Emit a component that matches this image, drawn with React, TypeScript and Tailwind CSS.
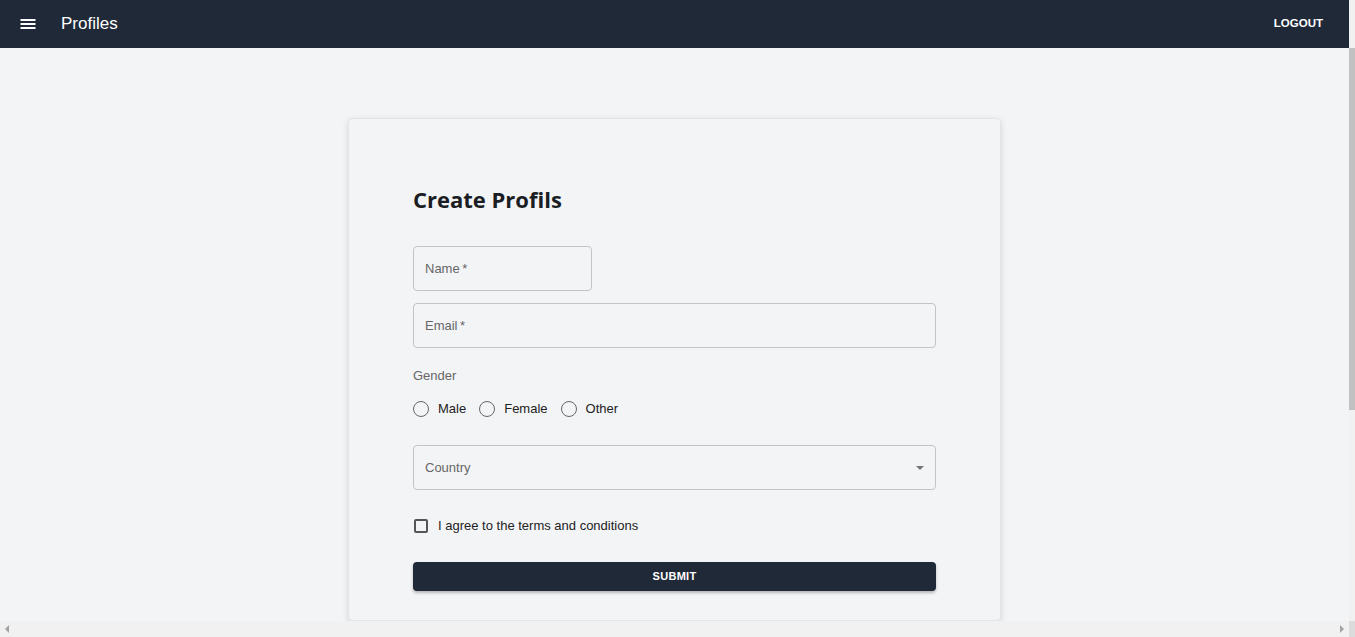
import { useState } from "react";

const font = "font-['Liberation_Sans',Arial,sans-serif]";

const MenuIcon = () => (
  <svg width="24" height="24" viewBox="0 0 24 24" className="text-white">
    <path d="M4.5 7h15v2h-15zM4.5 11h15v2h-15zM4.5 15h15v2h-15z" fill="currentColor" />
  </svg>
);

const Field = ({ label, className }: { label: string; className?: string }) => (
  <div
    className={`h-[45px] rounded-[4px] border border-[#c4c4c4] flex items-center px-[11px] text-[13px] text-[#666] ${className ?? ""}`}
  >
    <span>
      {label}
      {"\u2009*"}
    </span>
  </div>
);

const Radio = ({ label }: { label: string }) => (
  <label className="flex items-center gap-[9px] cursor-pointer">
    <span className="w-4 h-4 rounded-full border-[1.5px] border-[#666]" />
    <span className="text-[13px] text-[#222]">{label}</span>
  </label>
);

const ProfileForm = () => {
  const [agree, setAgree] = useState(false);
  return (
    <section className="w-[653px] rounded-[4px] border border-[#e3e4e7] bg-[#f3f4f6] shadow-[0_2px_6px_rgba(0,0,0,0.12)] px-[64px] pt-[64px] pb-24">
      <h1 className="font-['Open_Sans',sans-serif] font-bold text-[22px] leading-8 text-[#1a1d23]">
        Create Profils
      </h1>
      <div className="mt-[31px] flex flex-col gap-3">
        <Field label="Name" className="w-[179px]" />
        <Field label="Email" />
      </div>
      <p className="mt-[18px] text-[13px] leading-5 text-[#666]">Gender</p>
      <div className="mt-[11px] h-6 flex items-center gap-[13px]">
        <Radio label="Male" />
        <Radio label="Female" />
        <Radio label="Other" />
      </div>
      <div className="mt-[24px] h-[45px] rounded-[4px] border border-[#c4c4c4] flex items-center justify-between pl-[11px] pr-[11px] text-[13px] text-[#666]">
        <span>Country</span>
        <span className="w-0 h-0 border-l-[4px] border-r-[4px] border-t-[4px] border-l-transparent border-r-transparent border-t-[#757575]" />
      </div>
      <label
        className="mt-[24px] h-6 flex items-center gap-[10px] cursor-pointer"
        onClick={() => setAgree(!agree)}
      >
        <span
          className={`ml-[1px] w-[14px] h-[14px] rounded-[2px] border-2 border-[#555] ${agree ? "bg-[#1f2937]" : ""}`}
        />
        <span className="text-[13px] text-[#222]">I agree to the terms and conditions</span>
      </label>
      <button className="mt-[24px] w-full h-[29px] rounded-[4px] bg-[#1f2937] text-white text-[11px] font-bold tracking-[0.3px] shadow-[0_2px_3px_rgba(0,0,0,0.25)]">
        SUBMIT
      </button>
    </section>
  );
};

export default function App() {
  return (
    <div className={`${font} w-full h-[637px] flex flex-col overflow-hidden bg-[#f3f4f6]`}>
      <div className="flex flex-1 min-h-0">
        <div className="w-[1349px] flex flex-col">
          <header className="h-12 bg-[#1f2937] flex items-center justify-between pl-[16px] pr-[26px]">
            <div className="flex items-center gap-[21px]">
              <MenuIcon />
              <span className="text-white text-[17px]">Profiles</span>
            </div>
            <button className="text-white text-[11.5px] font-bold">LOGOUT</button>
          </header>
          <main className="flex-1 flex justify-center pt-[70px] overflow-hidden">
            <ProfileForm />
          </main>
        </div>
        <div className="w-[6px] flex flex-col bg-[#f1f1f1]">
          <div className="h-12" />
          <div className="h-[362px] bg-[#c1c1c1]" />
        </div>
      </div>
      <div className="h-4 flex">
        <div className="w-[1349px] bg-[#f1f1f1] flex items-center justify-between px-[5px]">
          <span className="w-0 h-0 border-y-[4px] border-r-[4px] border-y-transparent border-r-[#a3a3a3]" />
          <span className="w-0 h-0 border-y-[4px] border-l-[4px] border-y-transparent border-l-[#a3a3a3]" />
        </div>
        <div className="flex-1 bg-[#dcdcdc]" />
      </div>
    </div>
  );
}
